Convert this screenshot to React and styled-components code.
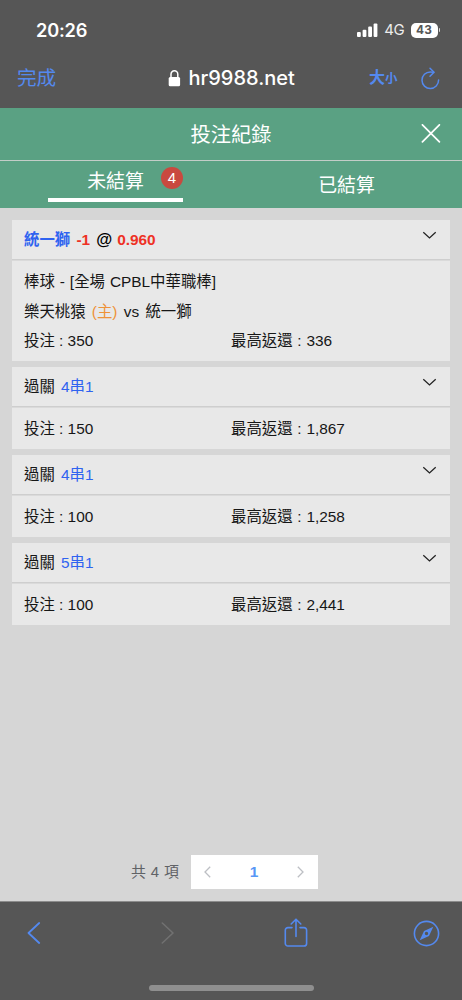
import React from "react";
import styled, { createGlobalStyle } from "styled-components";

const Global = createGlobalStyle`
  * { box-sizing: border-box; }
  html, body { margin: 0; padding: 0; background: #565656; }
  body { font-family: "Liberation Sans", "Noto Sans CJK TC", sans-serif; }
`;

const Screen = styled.div`
  width: 462px;
  height: 1000px;
  display: flex;
  flex-direction: column;
  overflow: hidden;
  background: #d6d6d6;
`;

const BrowserTop = styled.header`
  height: 108px;
  flex: none;
  background: #565656;
  color: #fff;
  font-family: Inter, "Noto Sans CJK TC", sans-serif;
`;

const StatusBar = styled.div`
  height: 58px;
  padding: 18px 22px 0 36px;
  display: flex;
  justify-content: space-between;
  align-items: flex-start;
`;

const Clock = styled.span`
  font-size: 18.2px;
  line-height: 24px;
  font-weight: 600;
  letter-spacing: -0.2px;
`;

const StatusIcons = styled.div`
  height: 24px;
  display: flex;
  align-items: center;
`;

const Network = styled.span`
  margin: 0 6px 0 6px;
  font-size: 15px;
  line-height: 24px;
  letter-spacing: -0.3px;
  color: #ececec;
`;

const Battery = styled.span`
  width: 27px;
  height: 15px;
  border-radius: 5px;
  background: #fff;
  color: #565656;
  font-size: 11.8px;
  font-weight: 700;
  line-height: 15.5px;
  letter-spacing: 0.2px;
  text-align: center;
`;

const BatteryTip = styled.span`
  width: 1.5px;
  height: 4px;
  margin-left: 1px;
  border-radius: 0 2px 2px 0;
  background: #d8d8d8;
`;

const AddressBar = styled.div`
  height: 40px;
  padding: 0 22px 0 17px;
  display: grid;
  grid-template-columns: 150.5px 1fr 71px;
  grid-template-rows: 40px;
  align-items: center;
`;

const Done = styled.span`
  font-size: 19.6px;
  line-height: 38px;
  color: #5489ee;
`;

const Address = styled.div`
  display: flex;
  align-items: center;
  gap: 7px;
  font-size: 20px;
  line-height: 38px;
  font-weight: 500;
`;

const AddressTools = styled.div`
  display: flex;
  align-items: center;
  justify-content: space-between;
  color: #5489ee;
`;

const TextSize = styled.span`
  display: flex;
  align-items: baseline;
  font-size: 16px;
  font-weight: 600;
  line-height: 38px;
  small { font-size: 12.5px; }
`;

const TitleBar = styled.div`
  flex: none;
  height: 53px;
  padding: 0 21px;
  display: grid;
  grid-template-columns: 20px 1fr 20px;
  align-items: center;
  background: #5aa183;
  border-bottom: 1px solid #c3cdc8;
  color: #fff;
`;

const Title = styled.h1`
  grid-column: 2;
  margin: 0;
  padding-top: 2px;
  font-size: 20.3px;
  font-weight: 400;
  line-height: 50px;
  text-align: center;
`;

const Tabs = styled.nav`
  flex: none;
  height: 47px;
  display: grid;
  grid-template-columns: 1fr 1fr;
  background: #5aa183;
  color: #fff;
`;

const Tab = styled.div`
  display: flex;
  justify-content: center;
  font-size: 18.9px;
  line-height: ${(p) => (p.$active ? 42 : 50)}px;
`;

const TabInner = styled.div`
  position: relative;
  width: 135px;
  height: 41px;
  text-align: center;
  border-bottom: ${(p) => (p.$active ? "4px solid #fff" : "0")};
`;

const Badge = styled.span`
  position: absolute;
  right: 0;
  top: 6px;
  width: 22px;
  height: 22px;
  border-radius: 50%;
  background: #c9493f;
  font-size: 15px;
  line-height: 22px;
  text-align: center;
`;

const List = styled.main`
  flex: 1;
  padding: 12px 12px 0;
  display: flex;
  flex-direction: column;
  gap: 6px;
  color: #161616;
  font-size: 15.4px;
`;

const Card = styled.section`
  display: flex;
  flex-direction: column;
`;

const CardHead = styled.div`
  height: 40px;
  padding: 0 13px 0 12px;
  display: flex;
  justify-content: space-between;
  background: #e8e8e8;
  border-bottom: 1px solid #cecece;
  line-height: 39px;
  font-weight: ${(p) => (p.$bold ? 700 : 400)};
`;

const Chevron = styled.svg`
  margin-top: 11px;
  flex: none;
`;

const CardBody = styled.div`
  height: ${(p) => (p.$detailed ? 101 : 42)}px;
  padding: 6px 12px 0;
  background: #e8e8e8;
  border-top: 1px solid #dadada;
`;

const Line = styled.div`
  height: 29.5px;
  line-height: 29.5px;
  white-space: pre;
  word-spacing: ${(p) => p.$spread || 0}px;
`;

const Amounts = styled(Line)`
  display: grid;
  grid-template-columns: 207px 1fr;
`;

const Payout = styled.span`
  word-spacing: 0.5px;
`;

const Tint = styled.span`
  color: ${(p) => p.$color};
  margin-left: ${(p) => p.$gap || 0}px;
  margin-right: ${(p) => p.$after || 0}px;
`;

const AtSign = styled.span`
  margin: 0 5px 0 6px;
  color: #000;
  font-size: 16.4px;
`;

const Pager = styled.div`
  flex: none;
  height: 46px;
  padding: 0 144px 12px 131px;
  display: flex;
  justify-content: space-between;
  align-items: center;
  color: #606266;
  font-size: 14.9px;
  line-height: 34px;
  word-spacing: 0.8px;
`;

const PageBox = styled.div`
  width: 127px;
  height: 34px;
  padding: 0 14px 0 13px;
  display: flex;
  justify-content: space-between;
  align-items: center;
  background: #fff;
`;

const PageNumber = styled.b`
  color: #5897f6;
  font-size: 15.5px;
  line-height: 36px;
`;

const BrowserBottom = styled.footer`
  flex: none;
  height: 99px;
  background: #565656;
  border-top: 1px solid #8c8c8c;
  display: flex;
  flex-direction: column;
  justify-content: space-between;
  align-items: center;
  padding-bottom: 9px;
`;

const Toolbar = styled.div`
  width: 462px;
  height: 62px;
  padding: 0 22px 0 27px;
  display: grid;
  grid-template-columns: 133px 124px 1fr 27px;
  align-items: center;
`;

const HomeBar = styled.div`
  width: 165px;
  height: 6px;
  border-radius: 3px;
  background: #8f8f8f;
`;

const blue = "#2f63f0";
const red = "#ee3124";

function BetCard({ bold, heading, stake, payout, children }) {
  return (
    <Card>
      <CardHead $bold={bold}>
        <span>{heading}</span>
        <Chevron width="15" height="9" viewBox="0 0 15 9" fill="none">
          <path d="M1.3 1.2 7.5 7l6.2-5.8" stroke="#222" strokeWidth="1.25" />
        </Chevron>
      </CardHead>
      <CardBody $detailed={Boolean(children)}>
        {children}
        <Amounts>
          <span>投注 : {stake}</span>
          <Payout>最高返還 : {payout}</Payout>
        </Amounts>
      </CardBody>
    </Card>
  );
}

const parlays = [
  { name: "4串1", stake: "150", payout: "1,867" },
  { name: "4串1", stake: "100", payout: "1,258" },
  { name: "5串1", stake: "100", payout: "2,441" },
];

export default function App() {
  return (
    <Screen>
      <Global />
      <BrowserTop>
        <StatusBar>
          <Clock>20:26</Clock>
          <StatusIcons>
            <svg width="21" height="14" viewBox="0 0 21 14" fill="#fff">
              <rect x="0" y="9" width="3.8" height="5" rx="1" />
              <rect x="5.6" y="6.7" width="3.8" height="7.3" rx="1" />
              <rect x="11.2" y="3.6" width="3.8" height="10.4" rx="1" />
              <rect x="16.6" y="0.4" width="3.8" height="13.6" rx="1" />
            </svg>
            <Network>4G</Network>
            <Battery>43</Battery>
            <BatteryTip />
          </StatusIcons>
        </StatusBar>
        <AddressBar>
          <Done>完成</Done>
          <Address>
            <svg width="14" height="17" viewBox="0 0 14 17">
              <rect x="0.7" y="7" width="11.4" height="9.3" rx="1.5" fill="#fff" />
              <path d="M3 8V4.3a3.4 3.5 0 0 1 6.8 0V8" fill="none" stroke="#fff" strokeWidth="1.5" />
            </svg>
            <span>hr9988.net</span>
          </Address>
          <AddressTools>
            <TextSize>大<small>小</small></TextSize>
            <svg width="20" height="23" viewBox="0 0 20 23" fill="none" stroke="#5489ee" strokeWidth="1.5" strokeLinecap="round" strokeLinejoin="round">
              <path d="M18.6 13.1A8.3 8.3 0 1 1 10.3 4.9c1.4 0 2.6.2 3.4.5" />
              <path d="M10 1.2 14 5.3 10 9.3" />
            </svg>
          </AddressTools>
        </AddressBar>
      </BrowserTop>
      <TitleBar>
        <Title>投注紀錄</Title>
        <svg width="20" height="20" viewBox="0 0 20 20" stroke="#fff" strokeWidth="1.7" strokeLinecap="round">
          <path d="M1.4 .8 18.4 17.8M18.4 .8 1.4 17.8" />
        </svg>
      </TitleBar>
      <Tabs>
        <Tab $active>
          <TabInner $active>
            未結算<Badge>4</Badge>
          </TabInner>
        </Tab>
        <Tab>
          <TabInner>已結算</TabInner>
        </Tab>
      </Tabs>
      <List>
        <BetCard
          bold
          stake="350"
          payout="336"
          heading={
            <>
              <Tint $color={blue} $after={2}>統一獅</Tint> <Tint $color={red}>-1</Tint>
              <AtSign>@</AtSign>
              <Tint $color={red}>0.960</Tint>
            </>
          }
        >
          <Line $spread={0.7}>棒球 - [全場 CPBL中華職棒]</Line>
          <Line>
            樂天桃猿 <Tint $color="#ee9238" $gap={2} $after={2}>(主)</Tint> vs <Tint $gap={2}>統一獅</Tint>
          </Line>
        </BetCard>
        {parlays.map((p, i) => (
          <BetCard
            key={i}
            stake={p.stake}
            payout={p.payout}
            heading={<>過關 <Tint $color={blue} $gap={2}>{p.name}</Tint></>}
          />
        ))}
      </List>
      <Pager>
        <span>共 4 項</span>
        <PageBox>
          <svg width="7" height="12" viewBox="0 0 7 12" fill="none" stroke="#bdbfc4" strokeWidth="1.3">
            <path d="M6.2 .8 1 6l5.2 5.2" />
          </svg>
          <PageNumber>1</PageNumber>
          <svg width="7" height="12" viewBox="0 0 7 12" fill="none" stroke="#bdbfc4" strokeWidth="1.3">
            <path d="M.8 .8 6 6 .8 11.2" />
          </svg>
        </PageBox>
      </Pager>
      <BrowserBottom>
        <Toolbar>
          <svg width="14" height="22" viewBox="0 0 14 22" fill="none" stroke="#5489ee" strokeWidth="1.8" strokeLinecap="round" strokeLinejoin="round">
            <path d="M12.2 1 1.5 11 12.2 21" />
          </svg>
          <svg width="14" height="22" viewBox="0 0 14 22" fill="none" stroke="#717171" strokeWidth="1.6" strokeLinecap="round" strokeLinejoin="round">
            <path d="M2.3 1 13 11 2.3 21" />
          </svg>
          <svg width="24" height="30" viewBox="0 0 24 30" fill="none" stroke="#5489ee" strokeWidth="1.6" strokeLinecap="round" strokeLinejoin="round">
            <path d="M8 9.6H4A2.6 2.6 0 0 0 1.3 12.2v13.2A2.6 2.6 0 0 0 4 28h16a2.6 2.6 0 0 0 2.6-2.6V12.2A2.6 2.6 0 0 0 20 9.6h-4" />
            <path d="M12 18.5V1.4M7.2 6 12 1.2 16.8 6" />
          </svg>
          <svg width="27" height="27" viewBox="0 0 27 27">
            <circle cx="13.5" cy="13.5" r="12.1" fill="none" stroke="#5489ee" strokeWidth="1.6" />
            <path fillRule="evenodd" fill="#5489ee" d="M20.3 6.7 16 15.9 6.7 20.3 11 11ZM13.5 11.8a1.7 1.7 0 1 0 0 3.4 1.7 1.7 0 0 0 0-3.4Z" />
          </svg>
        </Toolbar>
        <HomeBar />
      </BrowserBottom>
    </Screen>
  );
}
